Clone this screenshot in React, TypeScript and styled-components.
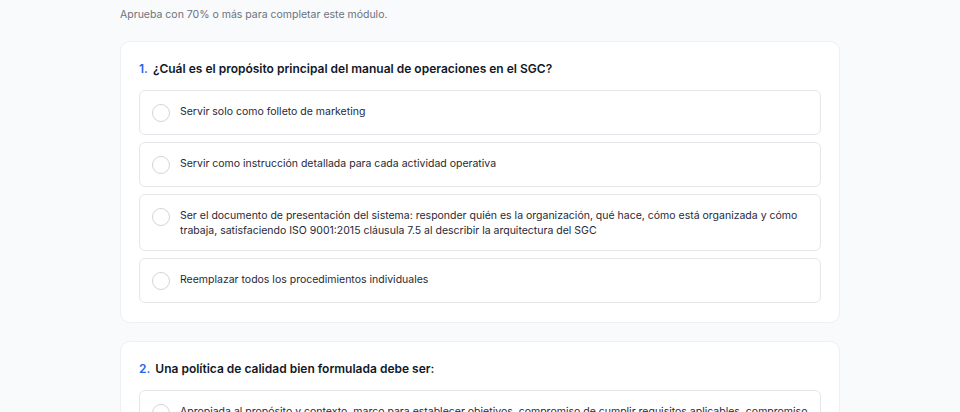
import React from 'react';
import styled, { createGlobalStyle } from 'styled-components';

interface Question {
  id: number;
  text: string;
  options: string[];
}

const questions: Question[] = [
  {
    id: 1,
    text: '¿Cuál es el propósito principal del manual de operaciones en el SGC?',
    options: [
      'Servir solo como folleto de marketing',
      'Servir como instrucción detallada para cada actividad operativa',
      'Ser el documento de presentación del sistema: responder quién es la organización, qué hace, cómo está organizada y cómo trabaja, satisfaciendo ISO 9001:2015 cláusula 7.5 al describir la arquitectura del SGC',
      'Reemplazar todos los procedimientos individuales',
    ],
  },
  {
    id: 2,
    text: 'Una política de calidad bien formulada debe ser:',
    options: [
      'Apropiada al propósito y contexto, marco para establecer objetivos, compromiso de cumplir requisitos aplicables, compromiso de mejora continua',
      'Un texto genérico copiado de otra organización',
      'Un documento confidencial solo para la dirección',
    ],
  },
];

const GlobalStyle = createGlobalStyle`
  html, body {
    margin: 0;
    padding: 0;
    background: #f9fafb;
    font-family: Inter, "Noto Sans", sans-serif;
    -webkit-font-smoothing: antialiased;
  }
`;

export default function App() {
  return (
    <>
      <GlobalStyle />
      <Page>
        <Intro>Aprueba con 70% o más para completar este módulo.</Intro>
        <QuestionList>
          {questions.map((q) => (
            <QuestionCard key={q.id}>
              <QuestionTitle>
                <QuestionNumber>{q.id}.</QuestionNumber>
                {q.text}
              </QuestionTitle>
              <Options>
                {q.options.map((opt) => (
                  <Option key={opt}>
                    <Radio />
                    <OptionText>{opt}</OptionText>
                  </Option>
                ))}
              </Options>
            </QuestionCard>
          ))}
        </QuestionList>
      </Page>
    </>
  );
}

const Page = styled.div`
  width: 720px;
  margin: 0 auto 0 120px;
  padding-top: 7px;
`;

const Intro = styled.p`
  margin: 0 0 18px;
  font-size: 10.5px;
  line-height: 16px;
  color: #6b7280;
`;

const QuestionList = styled.div`
  display: flex;
  flex-direction: column;
  gap: 18px;
`;

const QuestionCard = styled.section`
  background: #ffffff;
  border: 1px solid #eef0f2;
  border-radius: 10px;
  padding: 19px 18px;
`;

const QuestionTitle = styled.h3`
  margin: 0 0 13px;
  font-size: 12px;
  line-height: 16px;
  font-weight: 600;
  color: #111827;
`;

const QuestionNumber = styled.span`
  color: #2563eb;
  margin-right: 5px;
`;

const Options = styled.div`
  display: flex;
  flex-direction: column;
  gap: 7px;
`;

const Option = styled.label`
  display: flex;
  align-items: flex-start;
  gap: 10px;
  padding: 12px;
  border: 1px solid #e5e7eb;
  border-radius: 6px;
  background: #ffffff;
  cursor: pointer;
`;

const Radio = styled.span`
  flex: none;
  box-sizing: border-box;
  width: 18px;
  height: 18px;
  margin-top: 1px;
  border: 1.5px solid #d1d5db;
  border-radius: 50%;
  background: #ffffff;
`;

const OptionText = styled.span`
  font-size: 10.5px;
  line-height: 15px;
  color: #1f2937;
  padding-top: 1px;
`;
